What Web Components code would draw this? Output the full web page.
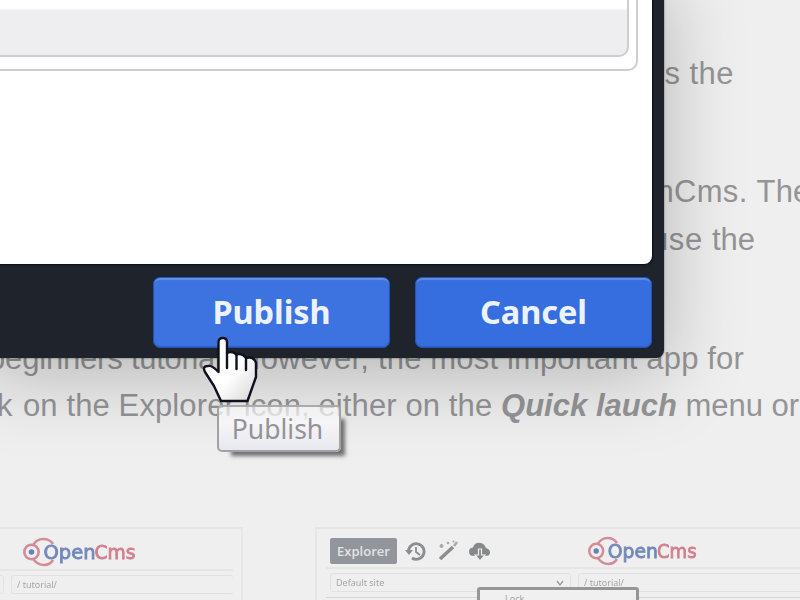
<!DOCTYPE html>
<html lang="en"><head><meta charset="utf-8"><title>Publish</title>
<style>html,body{margin:0;width:800px;height:600px;overflow:hidden;background:#efefef}</style></head>
<body>
<cms-page>
  <text-line style="margin-top:49.5px;padding-left:664.5px"><fit-text w="69.5">s the</fit-text></text-line>
  <text-line style="margin-top:71px;padding-left:656.5px"><fit-text w="100">nCms. </fit-text><fit-text w="54">The</fit-text></text-line>
  <text-line style="padding-left:651px"><fit-text w="61">use </fit-text><fit-text w="43">the</fit-text></text-line>
  <text-line style="margin-top:71px;margin-left:-12px"><fit-text w="143">beginners </fit-text><fit-text w="107">tutorial. </fit-text><fit-text w="140">However, </fit-text><fit-text w="366">the most important app for</fit-text></text-line>
  <text-line style="margin-left:-3px"><fit-text w="26">k </fit-text><fit-text w="478">on the Explorer icon, either on the </fit-text><fit-text w="176" style="font:italic 700 31px/48px 'Liberation Sans',Arial,sans-serif">Quick lauch</fit-text><fit-text w="122"> menu or</fit-text></text-line>
  <site-thumbs slot="thumbs"></site-thumbs>
  <publish-dialog slot="over">
    <cms-button tone="#3c73e0">Publish</cms-button>
    <cms-button tone="#366ee0" w="107">Cancel</cms-button>
  </publish-dialog>
  <tool-tip slot="over">Publish</tool-tip>
  <hand-cursor slot="over"></hand-cursor>
</cms-page>
<script>
function define(name, html, setup) {
  customElements.define(name, class extends HTMLElement {
    connectedCallback() {
      if (this.shadowRoot) return;
      this.attachShadow({mode: 'open'}).innerHTML = html;
      if (setup) setup(this);
    }
  });
}

define('text-line', `<style>:host{display:flex;height:47.7px;line-height:48px;white-space:nowrap;flex:none}</style><slot></slot>`);

define('cms-page', `<style>
:host{display:flex;flex-direction:column;position:relative;width:800px;height:600px;overflow:hidden;
font:31px/48px "Liberation Sans",Arial,sans-serif;color:#959597;background:#efefef}
main{display:flex;flex-direction:column;height:527px;flex:none}
</style><main><slot></slot></main><slot name="thumbs"></slot><slot name="over"></slot>`);

define('publish-dialog', `<style>
:host{position:absolute;left:-20px;top:-30px;width:684px;height:388px;box-sizing:border-box;padding:0 12px 0 0;
display:flex;flex-direction:column;background:#1f242c;border-radius:0 0 8px 0;
box-shadow:0 0 2px rgba(0,0,0,.6),0 16px 80px rgba(0,0,0,.25)}
.body{height:294px;background:#fff;border-radius:0 0 8px 0;box-shadow:0 0 2px 1px #080c14;flex:none}
.outer{height:97px;margin-right:14px;border:2px solid #cecece;border-radius:0 0 10px 0;box-sizing:content-box}
.inner{height:82.500px;margin-right:7px;border:solid #cecece;border-width:0 2px 2px 0;border-radius:0 0 10px 0;
background:linear-gradient(#fff 36px,#eeeef1 39px)}
footer{display:flex;justify-content:flex-end;gap:25px;padding-top:13px}
</style><div class="body"><div class="outer"><div class="inner"></div></div></div><footer><slot></slot></footer>`);

define('cms-button', `<style>
:host{display:flex;justify-content:center;width:237px;height:70.500px;box-sizing:border-box;border-radius:7px;
font:700 32.500px/67px "Noto Sans","Open Sans",sans-serif;color:#edf2ff;
border:1px solid #2355b8;box-shadow:inset 0 3px 1px -1px rgba(255,255,255,.22),inset 0 -1px 1px #2b60cb}
</style><fit-text></fit-text>`, el => {
  el.style.background = el.getAttribute('tone');
  const label = document.createElement('fit-text');
  label.setAttribute('w', el.getAttribute('w') || 118);
  label.textContent = el.textContent;
  el.shadowRoot.querySelector('fit-text').replaceWith(label);
});

define('tool-tip', `<style>
:host{position:absolute;left:217px;top:405px;width:124px;height:47px;box-sizing:border-box;display:flex;justify-content:center;
border:2px solid #a2a2a2;border-top-color:#aaa;border-radius:5px;padding-right:3px;
background:linear-gradient(rgba(250,250,252,.6),rgba(248,248,250,.85) 35%,#e7e8ef);
box-shadow:9px 9px 4px -5px #707070;
font:26.500px/44px "Noto Sans","Open Sans",sans-serif;color:#949296}
</style><slot></slot>`);

define('hand-cursor', `<style>:host{position:absolute;left:200px;top:334px;width:60px;height:72px}svg{display:block}</style>
<svg width="60" height="72" viewBox="0 0 60 72"><defs><linearGradient id="g" x1="0" y1="0" x2="1" y2="1"><stop offset=".55" stop-color="#fff"/><stop offset="1" stop-color="#d5d5d5"/></linearGradient></defs>
<path d="M18.500 36V8Q18.500 4 22.700 4Q27 4 27 8V19Q32 16.500 36.500 20.500Q42 19 46 24Q54 22 56 29V43L47.500 67H21L14 52L5 38Q2 32 8 32Q12 31 18.500 38Z" fill="url(#g)" stroke="#10101e" stroke-width="2.400" stroke-linejoin="round"/>
<path d="M27 19V34M36.500 21V35M46 25V36" fill="none" stroke="#10101e" stroke-width="2.400" stroke-linecap="round"/></svg>`);

define('open-logo', `<style>:host{display:block;width:116px;height:28px}svg{display:block;overflow:visible}text{font:20px "DejaVu Sans",sans-serif}</style>
<svg width="116" height="28" viewBox="0 -3 116 28"><g fill="none" stroke="#d58b98" stroke-width="2.600"><circle cx="8.500" cy="14" r="7.200"/><path d="M10 7Q14 1 20 1Q27 1 30 6M10 21Q15 27 21 27Q27 27 30 22"/></g>
<circle cx="8.500" cy="14" r="2.800" fill="#6484b8"/>
<text x="20.500" y="21" textLength="52" lengthAdjust="spacingAndGlyphs" fill="#7389b9" stroke="#7389b9" stroke-width=".900">Open</text><text x="71.500" y="21" textLength="41" lengthAdjust="spacingAndGlyphs" fill="#d37f8d" stroke="#d37f8d" stroke-width=".900">Cms</text></svg>`);

define('site-thumbs', `<style>
:host{display:flex;gap:72px;height:73px;font:9px/19px "Noto Sans",sans-serif;color:#a5a5a5;filter:blur(.75px);flex:none}
.card{box-sizing:border-box;height:90px;border:2px solid #e6e6e6;flex:none}
.left{width:263px;margin-left:-20px;padding-right:8px}.right{width:520px;padding-left:9px;position:relative}
.bar{display:flex;height:40px;border-bottom:2px solid #e6e6e6;box-sizing:border-box;align-items:center}
.left .bar{height:42px}.left open-logo{margin-left:41px}
.right open-logo{margin-left:93px;transform:scaleX(.965);transform-origin:0 0}
.row{display:flex;gap:7px;padding-top:4px}
.f{height:17px;line-height:18px;border:1px solid #e1e1e1;border-radius:3px;padding:0 5px;white-space:nowrap;display:flex;justify-content:space-between}
.left .a{width:12px;margin-left:-2px}.left .f:last-child{flex:1;border-right:0}
.ex{width:67px;height:26px;background:#92969c;border-radius:2px;color:#e3e4e6;font:600 13px/26px "Open Sans",sans-serif;text-align:center;margin-left:4px;margin-top:5px}
.ic{display:block;margin:5px 0 0 6px}
.rule{height:1px;background:#d5d5d5;margin-top:5px}
.pop{position:absolute;left:160px;top:58px;width:156px;height:40px;border:3px solid #94979a;border-radius:3px;background:#f0f0f0;line-height:18px}
.pop span{display:block;margin-left:25px}
</style>
<div class="card left"><div class="bar"><open-logo></open-logo></div><div class="row"><div class="f a"></div><div class="f">/ tutorial/</div></div></div>
<div class="card right"><div class="bar"><div class="ex">Explorer</div>
<svg class="ic" width="92" height="26" viewBox="0 0 92 26"><g fill="none" stroke="#8b8d90" stroke-width="2.800"><path d="M5.500 14A7.800 7.800 0 1 1 9 20"/><path d="M13 9V14L17 17" stroke-width="1.800"/><path d="M37 21L50 9" stroke-width="3.500"/><path d="M51 8L54 4" stroke-width="2.500" stroke="#aaa"/></g><path d="M2 12H10L6 17Z" fill="#8b8d90"/><g fill="#aaa"><circle cx="38.500" cy="8" r="2"/><circle cx="45" cy="5" r="1.300"/><circle cx="50.500" cy="3.500" r="1"/></g>
<path d="M71 18Q66 18 66 13.500Q66 10 70 9.500Q72 4 77 5Q81 5 83 10Q87 11 87 14.500Q87 18 82 18Z" fill="#86888b"/><path d="M75.500 11V17H72L77 23L82 17H78.500V11Z" fill="#86888b" stroke="#efefef" stroke-width="1.200"/></svg><open-logo></open-logo></div>
<div class="row"><div class="f" style="width:229px;margin-left:4px;flex:none">Default site<svg width="10" height="18"><path d="M2 7L5 11L8 7" fill="none" stroke="#999" stroke-width="1.300"/></svg></div><div class="f" style="width:220px;flex:none">/ tutorial/</div></div><div class="rule"></div>
<div class="pop"><span>Lock</span></div></div>`);

/* A run of text spread by letter spacing to an exact advance width;
   defined last, so that its font is already inherited when it measures itself */
define('fit-text', `<style>:host{display:inline-block;white-space:pre;flex:none}span{white-space:pre}</style><span><slot></slot></span>`, el => {
  const span = el.shadowRoot.querySelector('span');
  const want = +el.getAttribute('w'), n = el.textContent.length;
  span.style.letterSpacing = (want - span.getBoundingClientRect().width) / n + 'px';
  el.style.width = want + 'px';
});
</script>
</body></html>
